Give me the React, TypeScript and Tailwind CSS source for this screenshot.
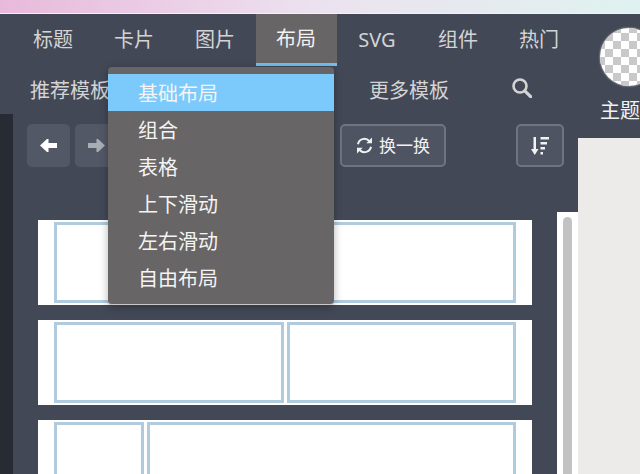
const tabs = ["标题", "卡片", "图片", "布局", "SVG", "组件", "热门"];
const menu = ["基础布局", "组合", "表格", "上下滑动", "左右滑动", "自由布局"];

function Cell({ className = "" }: { className?: string }) {
  return <div className={`border-[3px] border-[#afcbdd] bg-white ${className}`} />;
}

function Checker() {
  const squares = [];
  for (let y = 0; y < 8; y++) {
    for (let x = 0; x < 8; x++) {
      if ((x + y) % 2 === 0) squares.push(<rect key={`${x}-${y}`} x={x * 8 - 3} y={y * 8 - 3} width="8" height="8" fill="#c9c9c9" />);
    }
  }
  return (
    <svg width="58" height="58" viewBox="0 0 58 58" className="rounded-full bg-white">
      {squares}
    </svg>
  );
}

function ArrowLeft({ className = "" }: { className?: string }) {
  return (
    <svg width="17" height="13" viewBox="0 0 17 13" className={className} fill="currentColor">
      <path d="M0 6.5 7 0h1.5v4H17v5H8.5v4H7z" />
    </svg>
  );
}

function SortIcon() {
  return (
    <svg width="18" height="18" viewBox="0 0 18 18" fill="currentColor">
      <path d="M2.5 0h2.5v12h2.5L3.75 18 0 12h2.5zM9.5 0H18v2.5H9.5zM9.5 5H16v2.5H9.5zM9.5 10H14v2.5H9.5zM9.5 15H12v2.5H9.5z" />
    </svg>
  );
}

function SearchIcon() {
  return (
    <svg width="20" height="20" viewBox="0 0 20 20" fill="none" stroke="currentColor">
      <circle cx="8" cy="8" r="6.5" strokeWidth="2.6" />
      <path d="M12.8 12.8 19 19" strokeWidth="3.2" strokeLinecap="round" />
    </svg>
  );
}

function SyncIcon() {
  return (
    <svg width="17" height="17" viewBox="0 0 17 17" fill="none" stroke="currentColor" strokeWidth="2">
      <path d="M2 7.2A6.5 6.5 0 0 1 13.2 4" />
      <path d="M15 9.8A6.5 6.5 0 0 1 3.8 13" />
      <path d="M16 0.5V6.2H10.3z" fill="currentColor" stroke="none" />
      <path d="M1 16.5V10.8H6.7z" fill="currentColor" stroke="none" />
    </svg>
  );
}

export default function App() {
  return (
    <div className="relative flex h-[474px] w-[640px] flex-col overflow-hidden bg-[#434857] font-['Noto_Sans','Noto_Sans_CJK_SC',sans-serif]">
      <div className="h-[14px] shrink-0 border-b border-[#f2f2f2] bg-gradient-to-r from-[#e8b9db] via-[#ece2ef] to-[#dff2f0]" />
      <div className="flex min-h-0 flex-1">
        <div className="mt-[100px] w-[13px] shrink-0 bg-[#272b33]" />
        <div className="flex w-[565px] shrink-0 flex-col">
          <div className="flex h-[52px] shrink-0">
            {tabs.map((t) => (
              <div
                key={t}
                className={`flex w-[81px] shrink-0 items-center justify-center pb-[1px] pr-[1px] text-[20px] ${
                  t === "布局" ? "border-b-[3px] border-[#74c0ef] bg-[#686566] pb-0 pt-[1px] text-[#f2f2f2]" : "text-[#d4d4d4]"
                }`}
              >
                {t}
              </div>
            ))}
          </div>
          <div className="flex h-[58px] shrink-0 items-start pl-[17px] pt-[10px] text-[20px] text-[#d4d4d4]">
            <span className="w-[339px]">推荐模板</span>
            <span className="w-[143px]">更多模板</span>
            <span className="mt-[2px]">
              <SearchIcon />
            </span>
          </div>
          <div className="ml-[14px] flex h-[43px] shrink-0 items-stretch gap-[5px]">
            <div className="flex w-[43px] items-center justify-center rounded-[5px] bg-[#535866] text-white">
              <ArrowLeft />
            </div>
            <div className="flex w-[43px] items-center justify-center rounded-[5px] bg-[#535866] text-[#a9adb5]">
              <ArrowLeft className="rotate-180" />
            </div>
            <div className="ml-[217px] flex w-[106px] items-center justify-center gap-[6px] rounded-[5px] border-2 border-[#6d7484] bg-[#4f5463] text-[17px] text-[#f2f2f2]">
              <SyncIcon />
              <span>换一换</span>
            </div>
            <div className="ml-[65px] flex w-[48px] items-center justify-center rounded-[5px] border-2 border-[#6d7484] bg-[#4f5463] text-[#f2f2f2]">
              <SortIcon />
            </div>
          </div>
          <div className="flex min-h-0 flex-1">
            <div className="ml-[25px] mt-[53px] flex w-[494px] shrink-0 flex-col gap-[15px]">
              <div className="flex h-[85px] shrink-0 bg-white px-[16px] py-[2px]">
                <Cell className="flex-1" />
              </div>
              <div className="flex h-[85px] shrink-0 gap-[3px] bg-white px-[16px] py-[2px]">
                <Cell className="w-[230px]" />
                <Cell className="flex-1" />
              </div>
              <div className="flex h-[85px] shrink-0 gap-[3px] bg-white px-[16px] py-[2px]">
                <Cell className="w-[90px]" />
                <Cell className="flex-1" />
              </div>
            </div>
            <div className="ml-[25px] mt-[45px] w-[21px] shrink-0 bg-white px-[6px] pt-[5px]">
              <div className="h-full rounded-t-full bg-[#c2c2c2]" />
            </div>
          </div>
        </div>
        <div className="flex w-[62px] shrink-0 flex-col">
          <div className="ml-[22px] mt-[14px] flex w-[40px] flex-col">
            <div className="h-[58px] w-[58px] rounded-full shadow-[0_0_2px_rgba(255,255,255,0.8)]">
              <Checker />
            </div>
            <span className="mt-[10px] text-[20px] leading-[30px] text-[#f2f2f2]">主题</span>
          </div>
          <div className="mt-[12px] flex-1 bg-[#ecebe9]" />
        </div>
      </div>
      <div className="absolute left-[108px] top-[67px] w-[226px] rounded-[4px] border-b border-[#c9c9c9] bg-[#686566] pb-[8px] pt-[7px] shadow-[0_2px_8px_rgba(0,0,0,0.3)]">
        {menu.map((m, i) => (
          <div
            key={m}
            className={`flex h-[37px] items-center pl-[30px] pt-[2px] text-[20px] text-[#f4f4f4] ${i === 0 ? "bg-[#7cc9fb]" : ""}`}
          >
            {m}
          </div>
        ))}
      </div>
    </div>
  );
}
